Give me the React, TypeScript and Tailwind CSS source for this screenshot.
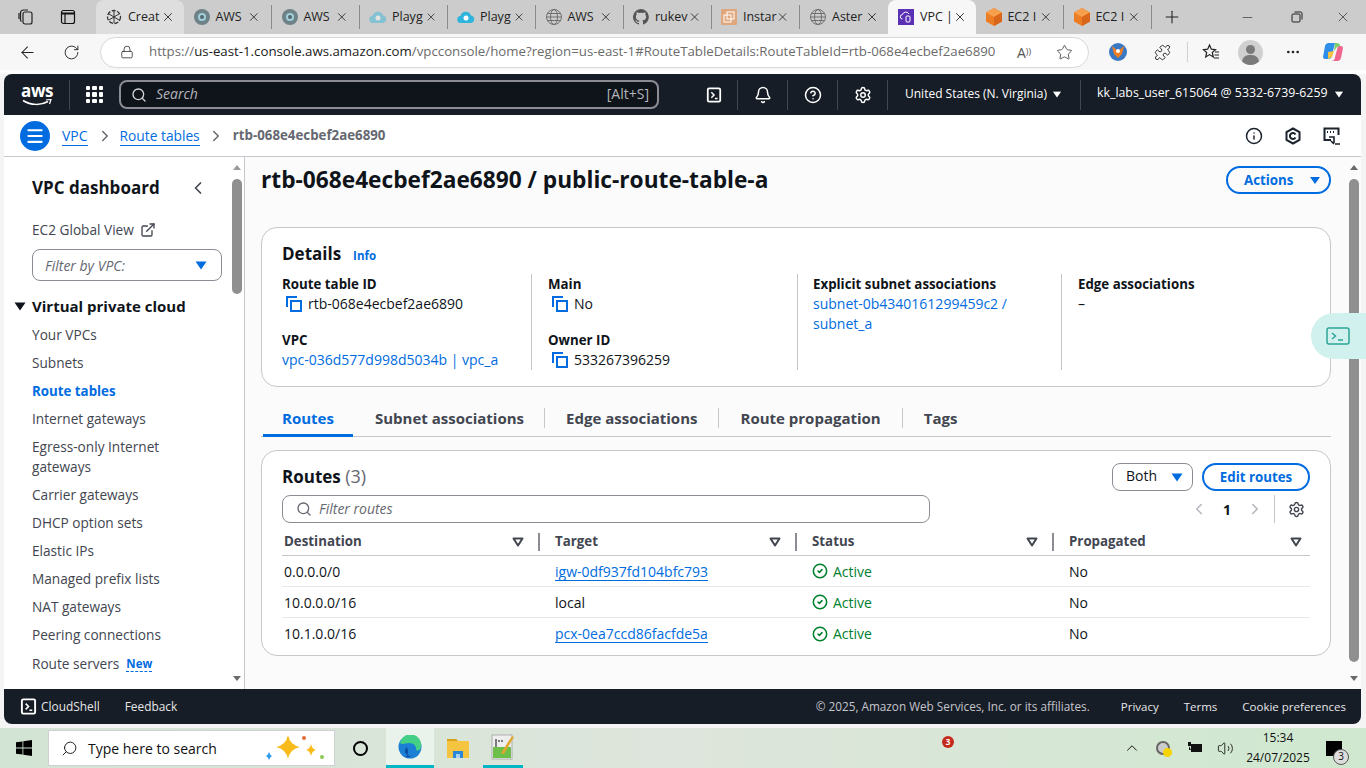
import { ArrowLeft, Bell, ChevronLeft, ChevronRight, CircleHelp, Lock, Minus, MoreHorizontal, Plus, RotateCw, Search, Settings, Star, Volume2, X, ChevronUp, CircleCheck, Puzzle, ExternalLink, Info, Menu } from "lucide-react"

const tabs = [
  { title: "Creat", kind: "gpt", hover: true },
  { title: "AWS", kind: "kk" },
  { title: "AWS", kind: "kk" },
  { title: "Playg", kind: "cloudpale" },
  { title: "Playg", kind: "cloud" },
  { title: "AWS", kind: "globe" },
  { title: "rukev", kind: "github" },
  { title: "Instar", kind: "inst" },
  { title: "Aster", kind: "globe" },
  { title: "VPC |", kind: "vpc", active: true },
  { title: "EC2 I", kind: "box" },
  { title: "EC2 I", kind: "box" },
]

const navItems = ["Your VPCs", "Subnets", "Route tables", "Internet gateways", "Egress-only Internet gateways", "Carrier gateways", "DHCP option sets", "Elastic IPs", "Managed prefix lists", "NAT gateways", "Peering connections"]

const routes = [
  { dest: "0.0.0.0/0", target: "igw-0df937fd104bfc793", link: true },
  { dest: "10.0.0.0/16", target: "local", link: false },
  { dest: "10.1.0.0/16", target: "pcx-0ea7ccd86facfde5a", link: true },
]

function TabIcon({ kind }: { kind: string }) {
  if (kind === "gpt")
    return (
      <svg width="16" height="16" viewBox="0 0 16 16" fill="none" stroke="#333" strokeWidth="1.3">
        <circle cx="8" cy="8" r="6.5" strokeDasharray="4 1.5" />
        <path d="M8 2v12M3 5l10 6M13 5L3 11" strokeWidth="1" />
      </svg>
    )
  if (kind === "kk")
    return (
      <svg width="16" height="16" viewBox="0 0 16 16">
        <circle cx="8" cy="8" r="8" fill="#6f8288" />
        <circle cx="8" cy="8" r="4" fill="#9fd0dc" />
        <circle cx="8" cy="8" r="2" fill="#55666c" />
      </svg>
    )
  if (kind === "cloud" || kind === "cloudpale")
    return (
      <svg width="18" height="16" viewBox="0 0 18 16" opacity={kind === "cloud" ? 1 : 0.45}>
        <path d="M4 14a3.500 3.500 0 0 1-.5-7A5.500 5.500 0 0 1 14 6.500 3.800 3.800 0 0 1 14 14z" fill="#2fb4dc" />
        <circle cx="9" cy="9" r="2.500" fill="#fff" />
      </svg>
    )
  if (kind === "globe")
    return (
      <svg width="16" height="16" viewBox="0 0 16 16" fill="none" stroke="#666" strokeWidth="0.9">
        <circle cx="8" cy="8" r="7.500" />
        <ellipse cx="8" cy="8" rx="3.500" ry="7.500" />
        <path d="M.5 8h15M1.500 4.500h13M1.500 11.500h13" />
      </svg>
    )
  if (kind === "github")
    return (
      <svg width="16" height="16" viewBox="0 0 16 16" fill="#555">
        <path d="M8 0a8 8 0 0 0-2.500 15.600c.4.100.5-.2.500-.4v-1.400c-2.200.5-2.700-1-2.700-1-.4-.9-.9-1.200-.9-1.200-.7-.5.100-.5.100-.5.800.100 1.200.8 1.200.8.700 1.200 1.900.9 2.300.7.100-.5.300-.9.500-1.100-1.800-.2-3.600-.9-3.600-4 0-.9.300-1.600.8-2.100-.1-.2-.4-1 .1-2.100 0 0 .7-.2 2.200.8a7.600 7.600 0 0 1 4 0c1.500-1 2.200-.8 2.200-.8.400 1.100.2 1.900.1 2.100.5.6.8 1.300.8 2.100 0 3.100-1.900 3.700-3.700 3.900.3.300.6.700.6 1.500v2.200c0 .2.100.5.600.4A8 8 0 0 0 8 0z" />
      </svg>
    )
  if (kind === "inst")
    return (
      <svg width="16" height="16" viewBox="0 0 16 16">
        <rect width="16" height="16" rx="1" fill="#e0a77c" />
        <rect x="6" y="3" width="7" height="7" fill="none" stroke="#fff" strokeWidth="1" />
        <rect x="3" y="6" width="7" height="7" fill="none" stroke="#fff" strokeWidth="1" />
      </svg>
    )
  if (kind === "vpc")
    return (
      <svg width="16" height="16" viewBox="0 0 16 16">
        <rect width="16" height="16" fill="#5a30b5" />
        <path d="M4.500 10a2.200 2.200 0 0 1 0-4.400A3.500 3.500 0 0 1 11 5" fill="none" stroke="#fff" strokeWidth="1" />
        <rect x="8" y="7" width="4" height="6" rx="1" fill="none" stroke="#fff" strokeWidth="1" />
      </svg>
    )
  return (
    <svg width="16" height="18" viewBox="0 0 16 18">
      <path d="M8 0l8 4.500v9L8 18l-8-4.500v-9z" fill="#ed7d23" />
      <path d="M8 0l8 4.500L8 9 0 4.500z" fill="#f6a04d" />
      <path d="M8 9l8-4.500v9L8 18z" fill="#d9661a" />
    </svg>
  )
}

function CopyIcon() {
  return (
    <svg width="18" height="18" viewBox="0 0 18 18" fill="none" stroke="#006ce0" strokeWidth="2" className="shrink-0">
      <path d="M2 12V2h10" />
      <rect x="6" y="6" width="10" height="10" />
    </svg>
  )
}

function TerminalIcon({ size = 18 }: { size?: number }) {
  return (
    <svg width={size} height={size} viewBox="0 0 18 18" fill="none" stroke="currentColor" strokeWidth="2">
      <rect x="2" y="1.500" width="14" height="15" rx="1.500" />
      <path d="M6 6l3 3-3 3M10 13h3" strokeWidth="1.700" />
    </svg>
  )
}

function Caret({ className = "" }: { className?: string }) {
  return (
    <svg width="12" height="9" viewBox="0 0 12 9" className={className}>
      <path d="M0.500 0.500h11L6 8.500z" fill="currentColor" />
    </svg>
  )
}

function SortCaret() {
  return (
    <svg width="12" height="10" viewBox="0 0 12 10" fill="none" stroke="#424650" strokeWidth="2" strokeLinejoin="round">
      <path d="M1.500 1.500h9L6 8.500z" />
    </svg>
  )
}

function HeaderDivider() {
  return <div className="h-[30px] w-px bg-[#424650]" />
}

function Field({ label, children }: { label: string; children: React.ReactNode }) {
  return (
    <div>
      <div className="text-[13.3px] font-bold leading-[20px] text-[#0f141a]">{label}</div>
      <div className="text-[14px] leading-[20px] text-[#0f141a]">{children}</div>
    </div>
  )
}

function CopyValue({ value }: { value: string }) {
  return (
    <div className="flex items-center gap-[5px] pl-[3px]">
      <CopyIcon />
      <span>{value}</span>
    </div>
  )
}

function ThHead({ label, last }: { label: string; last?: boolean }) {
  return (
    <div className="flex h-[27px] items-center pl-[2px]">
      <span className="flex-1 text-[13.3px] font-bold text-[#424650]">{label}</span>
      <SortCaret />
      <div className={last ? "w-[8px]" : "ml-[14px] mr-[13px] h-[18px] w-[2px] bg-[#8c8c94]"} />
    </div>
  )
}

export default function App() {
  return (
    <div className="flex h-[768px] w-[1366px] flex-col overflow-hidden bg-[#f4f4f4] font-['Open_Sans',sans-serif]">
      {/* Tab strip */}
      <div className="flex h-[34px] shrink-0 items-center bg-[#cccccc] text-[#222]">
        <div className="flex w-[96px] items-center">
          <svg width="18" height="18" viewBox="0 0 18 18" fill="none" stroke="#222" strokeWidth="1.200" className="ml-[17px]">
            <rect x="6" y="4" width="9" height="12" rx="2" />
            <path d="M4.500 13.500A2 2 0 0 1 3.500 12V5a3 3 0 0 1 3-3h4.500" />
            <path d="M2 11V5" />
          </svg>
          <svg width="16" height="16" viewBox="0 0 16 16" fill="none" stroke="#111" strokeWidth="1.200" className="ml-[25px]">
            <rect x="1.500" y="1.500" width="13" height="13" rx="2" />
            <path d="M1.500 4.500h13" strokeWidth="2" />
            <path d="M5 4.500v10" />
          </svg>
        </div>
        {tabs.map((t, i) => (
          <div
            key={i}
            className={
              "flex h-[34px] w-[88px] items-center pl-[9px] text-[12.5px] " +
              (t.active ? "rounded-t-[8px] bg-[#f7f7f7]" : t.hover ? "rounded-t-[8px] bg-[#dedede]" : "")
            }
          >
            <div className="flex w-[18px] justify-center">
              <TabIcon kind={t.kind} />
            </div>
            <div className="ml-[5px] w-[30px] whitespace-nowrap">{t.title}</div>
            <X size={14} strokeWidth={1.500} className="ml-[3px]" />
            {!t.active && !t.hover && i !== 8 && <div className="ml-[10px] h-[24px] w-px bg-[#8a8a8a]" />}
          </div>
        ))}
        <Plus size={20} strokeWidth={1.300} className="ml-[10px]" />
        <Minus size={15} strokeWidth={1} className="ml-[58px]" />
        <svg width="12" height="12" viewBox="0 0 12 12" fill="none" stroke="#222" strokeWidth="1" className="ml-[36px]">
          <rect x="1" y="3" width="8" height="8" rx="1" />
          <path d="M3.500 1H10a1.500 1.500 0 0 1 1 1v6.500" />
        </svg>
        <X size={16} strokeWidth={1} className="ml-[32px]" />
      </div>

      {/* Address bar */}
      <div className="flex h-[36px] shrink-0 items-center bg-[#f7f7f7] text-[#222]">
        <ArrowLeft size={19} strokeWidth={1.300} className="ml-[18px]" />
        <RotateCw size={17} strokeWidth={1.300} className="ml-[26px]" />
        <div className="ml-[20px] flex h-[31px] w-[989px] items-center rounded-full border border-[#d8d8d8] bg-white">
          <Lock size={14} strokeWidth={1.300} className="ml-[19px]" />
          <div className="ml-[15px] w-[848px] whitespace-nowrap text-[13.25px] text-[#6b6b6b]">
            https://<span className="text-[#1b1b1b]">us-east-1.console.aws.amazon.com</span>/vpcconsole/home?region=us-east-1#RouteTableDetails:RouteTableId=rtb-068e4ecbef2ae6890
          </div>
          <span className="ml-[20px] text-[14px] text-[#555]">A</span>
          <span className="text-[9px] text-[#555]">))</span>
          <Star size={17} strokeWidth={1.100} className="ml-[25px] text-[#333]" />
        </div>
        <svg width="20" height="20" viewBox="0 0 20 20" className="ml-[19px]">
          <circle cx="10" cy="10" r="9" fill="#3a78c4" />
          <path d="M4 4l6 5 6-5-2 8-4 4-4-4z" fill="#ef7d22" />
          <circle cx="10" cy="9" r="2" fill="#fff" />
        </svg>
        <Puzzle size={17} strokeWidth={1.300} className="ml-[26px]" />
        <div className="ml-[16px] h-[20px] w-px bg-[#d0d0d0]" />
        <svg width="18" height="18" viewBox="0 0 18 18" fill="none" stroke="#222" strokeWidth="1.200" className="ml-[14px]">
          <path d="M7.500 2l1.800 4.200 4.200.4-3.200 2.900 1 4.500-3.800-2.400L3.700 14l1-4.500L1.500 6.600l4.200-.4z" />
          <path d="M13 9h4M12.500 12h4.500M12 15h5" />
        </svg>
        <div className="relative ml-[18px] h-[25px] w-[25px] overflow-hidden rounded-full bg-[#d0d0d0]">
          <div className="absolute left-[8px] top-[5px] h-[9px] w-[9px] rounded-full bg-[#7a7a7a]" />
          <div className="absolute left-[4px] top-[15px] h-[14px] w-[17px] rounded-full bg-[#7a7a7a]" />
        </div>
        <MoreHorizontal size={16} strokeWidth={2} className="ml-[22px]" />
        <svg width="22" height="22" viewBox="0 0 22 22" className="ml-[21px]">
          <path d="M6 2h7l-3 12a4 4 0 0 1-4 4H3a2 2 0 0 1-2-2l2-11a4 4 0 0 1 3-3z" fill="#2f8ee8" />
          <path d="M9 20h7a4 4 0 0 0 3-3l2-10a2 2 0 0 0-2-2h-3l-3 11a4 4 0 0 1-4 4z" fill="#f0668f" />
          <path d="M13 2h2a3 3 0 0 1 3 3l-3 1-3 4z" fill="#7dd069" />
          <path d="M6 18l4-2 2-6-6 1z" fill="#f6c343" />
        </svg>
      </div>

      <div className="h-[4px] shrink-0 bg-white" />

      {/* Console */}
      <div className="flex min-h-0 flex-1 flex-col pl-[4px] pr-[5px]">
        {/* AWS header */}
        <div className="flex h-[41px] shrink-0 items-center rounded-tl-[8px] rounded-tr-[8px] bg-[#161d26] text-white">
          <div className="ml-[17px] flex w-[32px] flex-col items-center">
            <span className="h-[16px] text-[17px] font-bold leading-[15px] tracking-[-0.5px]">aws</span>
            <svg width="30" height="8" viewBox="0 0 30 8" fill="none">
              <path d="M1 1.500c8 5 18 5 25 1" stroke="#fff" strokeWidth="1.500" />
              <path d="M24 1l5-.5-1.500 4.500" stroke="#fff" strokeWidth="1.200" />
            </svg>
          </div>
          <div className="ml-[16px] h-[30px] w-px bg-[#424650]" />
          <div className="ml-[16px] grid h-[17px] w-[17px] grid-cols-3 gap-[2px]">
            {[0, 1, 2, 3, 4, 5, 6, 7, 8].map((d) => (
              <div key={d} className="rounded-[1px] bg-white" />
            ))}
          </div>
          <div className="ml-[16px] flex h-[29px] w-[540px] items-center rounded-[8px] border-2 border-[#8c8c94] bg-[#0f141a] text-[#b4b4bb]">
            <Search size={16} strokeWidth={2} className="ml-[10px] text-[#d5d5d8]" />
            <span className="ml-[9px] flex-1 -translate-y-px text-[14px] italic">Search</span>
            <span className="mr-[8px] -translate-y-px text-[14px]">[Alt+S]</span>
          </div>
          <div className="ml-[47px] flex w-[16px] justify-center">
            <TerminalIcon />
          </div>
          <div className="ml-[15px]"><HeaderDivider /></div>
          <Bell size={18} strokeWidth={2} className="ml-[16px]" />
          <div className="ml-[15px]"><HeaderDivider /></div>
          <CircleHelp size={18} strokeWidth={2} className="ml-[16px]" />
          <div className="ml-[15px]"><HeaderDivider /></div>
          <Settings size={18} strokeWidth={2} className="ml-[16px]" />
          <div className="ml-[15px]"><HeaderDivider /></div>
          <span className="ml-[17px] w-[146px] -translate-y-px whitespace-nowrap text-[12px] font-medium">United States (N. Virginia)</span>
          <Caret className="scale-75" />
          <div className="ml-[17px]"><HeaderDivider /></div>
          <span className="ml-[16px] w-[236px] -translate-y-px whitespace-nowrap text-[12.35px] font-medium">kk_labs_user_615064 @ 5332-6739-6259</span>
          <Caret className="scale-75" />
        </div>

        {/* Breadcrumb bar */}
        <div className="flex h-[42px] shrink-0 items-center border-b border-[#c6c6cd] bg-white">
          <div className="ml-[16px] flex h-[30px] w-[30px] items-center justify-center rounded-full bg-[#006ce0]">
            <Menu size={20} strokeWidth={2.500} className="text-white" />
          </div>
          <a className="ml-[12px] mt-[1px] border-b border-[#006ce0] text-[14px] leading-[18px] text-[#006ce0]">VPC</a>
          <ChevronRight size={18} strokeWidth={2} className="ml-[8px] text-[#656871]" />
          <a className="ml-[6px] mt-[1px] border-b border-[#006ce0] text-[13.75px] leading-[18px] text-[#006ce0]">Route tables</a>
          <ChevronRight size={18} strokeWidth={2} className="ml-[7px] text-[#656871]" />
          <span className="ml-[8px] mt-[1px] text-[13.3px] font-bold text-[#656871]">rtb-068e4ecbef2ae6890</span>
          <div className="ml-auto flex items-center text-[#1b232d]">
            <Info size={18} strokeWidth={2} />
            <svg width="18" height="18" viewBox="0 0 18 18" fill="none" stroke="currentColor" strokeWidth="2" className="ml-[21px]">
              <path d="M9 1.500l6.500 3.500v8L9 16.500 2.500 13V5z" />
              <path d="M11.500 7.500a3 3 0 1 0 0 3" />
            </svg>
            <svg width="20" height="20" viewBox="0 0 20 20" fill="none" stroke="currentColor" strokeWidth="2" className="ml-[20px] mr-[19px]">
              <path d="M9 14H2.500V2.500h14V9" />
              <path d="M5 6h1M8 6h1M11 6h1" />
              <path d="M7 11h5v6M9 15l3 3M13 18h5" strokeWidth="1.600" />
            </svg>
          </div>
        </div>

        {/* Body */}
        <div className="relative flex min-h-0 flex-1">
          {/* Sidebar */}
          <div className="relative w-[241px] shrink-0 overflow-hidden border-r border-[#c6c6cd] bg-white">
            <div className="pl-[28px] pt-[19px]">
              <div className="flex h-[24px] w-[176px] items-center justify-between">
                <span className="text-[17px] font-bold text-[#0f141a]">VPC dashboard</span>
                <ChevronLeft size={20} strokeWidth={2} className="text-[#424650]" />
              </div>
              <div className="mt-[18px] flex h-[24px] items-center text-[13.65px] text-[#424650]">
                EC2 Global View
                <ExternalLink size={16} strokeWidth={2} className="ml-[6px]" />
              </div>
              <div className="mt-[7px] flex h-[32px] w-[190px] items-center justify-between rounded-[8px] border border-[#8c8c94] pl-[12px] pr-[14px]">
                <span className="text-[14px] italic text-[#656871]">Filter by VPC:</span>
                <Caret className="text-[#006ce0]" />
              </div>
            </div>
            <div className="mt-[13px] flex h-[24px] items-center pl-[10px]">
              <Caret className="text-[#0f141a]" />
              <span className="ml-[6px] text-[15px] font-bold text-[#0f141a]">Virtual private cloud</span>
            </div>
            <div className="mt-[3px] w-[190px] pl-[28px] text-[13.65px] leading-[20px] text-[#424650]">
              {navItems.map((n) => (
                <div key={n} className={"py-[4px] " + (n === "Route tables" ? "text-[13.3px] font-bold text-[#006ce0]" : "")}>
                  {n}
                </div>
              ))}
              <div className="mt-[1px] flex items-center whitespace-nowrap py-[4px]">
                Route servers
                <span className="ml-[7px] border-b border-dashed border-[#006ce0] text-[11.5px] font-bold leading-[15px] text-[#006ce0]">New</span>
              </div>
            </div>
            {/* sidebar scrollbar */}
            <div className="absolute right-[2px] top-[8px] flex h-[516px] w-[10px] flex-col items-center">
              <div className="h-0 w-0 border-x-[4px] border-b-[5px] border-x-transparent border-b-[#9a9a9a]" />
              <div className="mt-[9px] h-[115px] w-[10px] rounded-full bg-[#8f8f8f]" />
              <div className="mt-auto h-0 w-0 border-x-[4px] border-t-[5px] border-x-transparent border-t-[#6a6a6a]" />
            </div>
          </div>

          {/* Main */}
          <div className="relative min-w-0 flex-1 bg-[#fbfbfb] pl-[16px] pr-[30px]">
            <div className="flex h-[70px] items-start justify-between pt-[9px]">
              <h1 className="text-[22.7px] font-bold leading-[28px] text-[#0f141a]">rtb-068e4ecbef2ae6890 / public-route-table-a</h1>
              <button className="flex h-[28px] w-[105px] items-center gap-[16px] rounded-full border-2 border-[#006ce0] pl-[16px] text-[13.3px] font-bold leading-[22px] text-[#006ce0]">
                Actions
                <Caret className="scale-90" />
              </button>
            </div>

            {/* Details card */}
            <div className="h-[160px] rounded-[16px] border border-[#c6c6cd] bg-white pl-[20px] pr-[20px] pt-[13px]">
              <div className="flex h-[26px] items-center">
                <span className="text-[17px] font-bold text-[#0f141a]">Details</span>
                <span className="ml-[12px] mt-[3px] text-[11.5px] font-bold text-[#006ce0]">Info</span>
              </div>
              <div className="mt-[7px] grid grid-cols-[249px_266px_264px_1fr]">
                <div className="flex h-[96px] flex-col gap-[16px]">
                  <Field label="Route table ID"><CopyValue value="rtb-068e4ecbef2ae6890" /></Field>
                  <Field label="VPC"><span className="text-[#006ce0]">vpc-036d577d998d5034b | vpc_a</span></Field>
                </div>
                <div className="flex h-[96px] flex-col gap-[16px] border-l border-[#c6c6cd] pl-[16px]">
                  <Field label="Main"><CopyValue value="No" /></Field>
                  <Field label="Owner ID"><CopyValue value="533267396259" /></Field>
                </div>
                <div className="h-[96px] border-l border-[#c6c6cd] pl-[15px]">
                  <Field label="Explicit subnet associations">
                    <span className="text-[#006ce0]">subnet-0b4340161299459c2 /<br />subnet_a</span>
                  </Field>
                </div>
                <div className="h-[96px] border-l border-[#c6c6cd] pl-[16px]">
                  <Field label="Edge associations">–</Field>
                </div>
              </div>
            </div>

            {/* Tabs */}
            <div className="mt-[18px] flex h-[32px] items-start border-b border-[#c6c6cd] text-[15px] font-bold text-[#424650]">
              <div className="-mb-px ml-[2px] h-[32px] w-[90px] border-b-[3px] border-[#006ce0] text-center leading-[26px] text-[#006ce0]">Routes</div>
              {["Subnet associations", "Edge associations", "Route propagation", "Tags"].map((t, i) => (
                <div key={t} className="flex h-[26px] items-center leading-[26px]">
                  {i > 0 && <div className="h-[20px] w-px bg-[#c6c6cd]" />}
                  <span className={i === 0 ? "pl-[22px] pr-[20px]" : "px-[21px]"}>{t}</span>
                </div>
              ))}
            </div>

            {/* Routes card */}
            <div className="mt-[13px] h-[206px] rounded-[16px] border border-[#c6c6cd] bg-white px-[20px] pt-[11px]">
              <div className="flex h-[30px] items-center justify-between">
                <div className="-translate-y-px text-[17px] font-bold text-[#0f141a]">
                  Routes <span className="text-[18px] font-normal text-[#656871]">(3)</span>
                </div>
                <div className="flex items-center gap-[9px]">
                  <div className="flex h-[28px] w-[81px] items-center justify-between rounded-[8px] border border-[#8c8c94] pl-[13px] pr-[9px] text-[14px] leading-[24px] text-[#0f141a]">
                    <span className="-translate-y-px">Both</span>
                    <Caret className="text-[#006ce0]" />
                  </div>
                  <button className="h-[28px] w-[108px] rounded-full border-2 border-[#006ce0] text-[13.3px] font-bold leading-[22px] text-[#006ce0]">Edit routes</button>
                </div>
              </div>
              <div className="mt-[3px] flex h-[28px] items-center justify-between">
                <div className="flex h-[28px] w-[648px] items-center rounded-[8px] border border-[#8c8c94]">
                  <Search size={16} strokeWidth={2} className="ml-[13px] text-[#656871]" />
                  <span className="ml-[7px] -translate-y-px text-[14px] italic text-[#656871]">Filter routes</span>
                </div>
                <div className="flex items-center text-[#b4b4bb]">
                  <ChevronLeft size={18} strokeWidth={2} />
                  <span className="mx-[15px] text-[14px] font-bold text-[#0f141a]">1</span>
                  <ChevronRight size={18} strokeWidth={2} />
                  <div className="ml-[10px] h-[28px] w-px bg-[#c6c6cd]" />
                  <Settings size={17} strokeWidth={2} className="ml-[13px] mr-[5px] text-[#424650]" />
                </div>
              </div>
              <div className="mt-[5px] grid grid-cols-[271px_257px_257px_1fr] border-b border-[#c6c6cd]">
                <ThHead label="Destination" />
                <ThHead label="Target" />
                <ThHead label="Status" />
                <ThHead label="Propagated" last />
              </div>
              {routes.map((r, i) => (
                <div key={r.dest} className={"grid h-[31px] grid-cols-[271px_257px_257px_1fr] items-center pl-[2px] text-[14px] text-[#0f141a] " + (i < 2 ? "border-b border-[#e8e8ea]" : "")}>
                  <div className="-ml-[2px] pl-[2px]">{r.dest}</div>
                  <div>
                    {r.link ? <span className="inline-block border-b border-[#006ce0] leading-[17px] text-[#006ce0]">{r.target}</span> : r.target}
                  </div>
                  <div className="flex items-center gap-[5px] text-[#00802f]">
                    <CircleCheck size={16} strokeWidth={2.300} />
                    Active
                  </div>
                  <div>No</div>
                </div>
              ))}
            </div>

            {/* main scrollbar */}
            <div className="absolute right-[2px] top-[8px] flex h-[516px] w-[10px] flex-col items-center">
              <div className="h-0 w-0 border-x-[4px] border-b-[5px] border-x-transparent border-b-[#6a6a6a]" />
              <div className="mt-[9px] h-[483px] w-[10px] rounded-full bg-[#8f8f8f]" />
              <div className="mt-auto h-0 w-0 border-x-[4px] border-t-[5px] border-x-transparent border-t-[#6a6a6a]" />
            </div>

            {/* CloudShell side tab */}
            <div className="absolute -right-[5px] top-[156px] flex h-[46px] w-[55px] items-center rounded-l-[24px] bg-[#d1f1ee] pl-[15px] text-[#2ea597]">
              <svg width="24" height="18" viewBox="0 0 24 18" fill="none" stroke="currentColor" strokeWidth="1.500">
                <rect x="1" y="1" width="22" height="16" rx="2" />
                <path d="M6 6l3.500 3L6 12M12 13h5" />
              </svg>
            </div>
          </div>
        </div>

        {/* Footer */}
        <div className="flex h-[35px] shrink-0 items-center rounded-bl-[8px] rounded-br-[8px] bg-[#161d26] text-[11.5px] font-medium text-[#e6e6e8]">
          <div className="ml-[16px] text-white"><TerminalIcon size={17} /></div>
          <span className="ml-[4px] text-[11.9px]">CloudShell</span>
          <span className="ml-[25px] text-[11.9px]">Feedback</span>
          <span className="ml-auto text-[11.75px] font-normal text-[#c6c6cd]">© 2025, Amazon Web Services, Inc. or its affiliates.</span>
          <span className="ml-[31px]">Privacy</span>
          <span className="ml-[25px]">Terms</span>
          <span className="ml-[25px] mr-[15px]">Cookie preferences</span>
        </div>
        <div className="h-[4px] shrink-0" />
      </div>

      {/* Taskbar */}
      <div className="relative flex h-[40px] shrink-0 items-center bg-gradient-to-r from-[#d2e4d4] via-[#dee5dc] to-[#cfe8cf] text-[#111]">
        <svg width="16" height="16" viewBox="0 0 16 16" className="ml-[16px]" fill="#000">
          <path d="M0 2.300l6.500-.9v6.200H0zM7.300 1.300L16 0v7.600H7.300zM0 8.400h6.500v6.200L0 13.700zM7.300 8.400H16V16l-8.700-1.200z" />
        </svg>
        <div className="ml-[16px] flex h-[36px] w-[287px] items-center border border-[#d0d0d0] bg-white">
          <Search size={17} strokeWidth={1.300} className="ml-[12px] -scale-x-100" />
          <span className="ml-[10px] text-[14px]">Type here to search</span>
          <svg width="62" height="34" viewBox="0 0 62 34" className="ml-[46px]">
            <path d="M25 4q2 10 12 12-10 2-12 12-2-10-12-12 10-2 12-12z" fill="#f9bb1a" />
            <path d="M48 13q1 5 5 6-4 1-5 6-1-5-5-6 4-1 5-6z" fill="#f9bb1a" />
            <path d="M6 21q1 3 3 4-2 1-3 4-1-3-3-4 2-1 3-4z" fill="#2f9bea" />
            <circle cx="41" cy="7" r="2" fill="#e8683c" />
            <circle cx="59" cy="26" r="2" fill="#8cc850" />
          </svg>
        </div>
        <div className="ml-[18px] h-[15px] w-[15px] rounded-full border-[2.500px] border-black" />
        <div className="ml-[18px] flex h-[40px] w-[48px] items-center justify-center border-b-[3px] border-[#00b7c3] bg-[#eaf2ec]">
          <svg width="24" height="24" viewBox="0 0 24 24">
            <circle cx="12" cy="12" r="11.500" fill="#1b7fd4" />
            <path d="M2 8a10 10 0 0 1 21 4c0 3-3 4-5 3 1-3-2-7-7-7-4 0-6 2-9 0z" fill="#44cf86" />
            <path d="M9 12a5 5 0 0 0 6 8 9 9 0 0 1-8 2c3-1 4-5 2-10z" fill="#0c4da2" />
          </svg>
        </div>
        <div className="ml-[8px] flex h-[40px] w-[32px] items-center justify-center">
          <svg width="22" height="22" viewBox="0 0 22 22">
            <path d="M0 2h9l2 2H22v17H0z" fill="#f5c542" />
            <path d="M0 2h9l2 2H0z" fill="#d9a21a" />
            <path d="M6 14h10v7H6z" fill="#2b88d8" />
            <path d="M9 17h4v4H9z" fill="#fff" opacity="0.6" />
          </svg>
        </div>
        <div className="ml-[9px] flex h-[40px] w-[40px] items-center justify-center border-b-[3px] border-[#00b7c3]">
          <svg width="24" height="28" viewBox="0 0 24 28">
            <rect x="1" y="2" width="20" height="24" fill="#eee" stroke="#999" strokeWidth="0.700" />
            <rect x="2" y="14" width="18" height="11" fill="#6cc04a" />
            <path d="M5 6v8M8 7v2M11 7v2" stroke="#333" strokeWidth="1.200" />
            <path d="M10 20L21 3l2 1-10 17z" fill="#e0a82e" />
          </svg>
        </div>

        <div className="ml-auto flex items-center">
          <ChevronUp size={18} strokeWidth={1.300} />
          <div className="relative ml-[15px] h-[14px] w-[14px] rounded-full border-2 border-[#666] bg-[#ccc]">
            <div className="absolute -bottom-[4px] -right-[4px] h-[9px] w-[9px] rounded-full bg-[#f6d400]" />
          </div>
          <svg width="16" height="14" viewBox="0 0 16 14" className="ml-[17px]" fill="#111">
            <rect x="4" y="3" width="11" height="8" />
            <path d="M1 1v4h3V1zM2 5v4h2" />
          </svg>
          <Volume2 size={17} strokeWidth={1.200} className="ml-[14px]" />
          <div className="ml-[8px] w-[72px] text-center text-[12px] leading-[20px]">
            15:34
            <br />
            24/07/2025
          </div>
          <div className="relative ml-[12px] mr-[24px]">
            <div className="h-[15px] w-[16px] bg-black" />
            <div className="absolute -bottom-[9px] -right-[7px] flex h-[16px] w-[16px] items-center justify-center rounded-full border border-[#555] bg-[#ddd] text-[10px]">3</div>
          </div>
        </div>
        <div className="absolute left-[942px] top-[8px] flex h-[12px] w-[12px] items-center justify-center rounded-full bg-[#c42b1c] text-[8px] font-bold text-white">3</div>
      </div>
    </div>
  )
}
